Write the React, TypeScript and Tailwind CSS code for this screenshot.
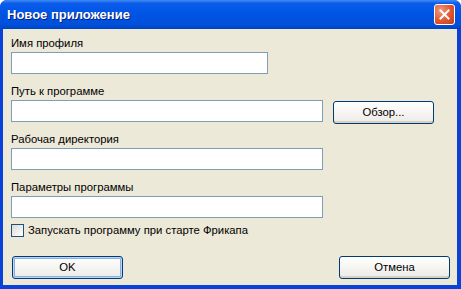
import { useState } from "react";

const font = { fontFamily: '"Liberation Sans", Arial, sans-serif' };

function Field({ label, width }: { label: string; width: string }) {
  return (
    <div className="flex flex-col">
      <span className="text-[11.3px] leading-[14px] text-black">{label}</span>
      <input
        className={`mt-[2px] h-[22px] ${width} border border-[#7F9DB9] bg-white px-1 text-[11px] outline-none`}
      />
    </div>
  );
}

function XpButton({ children, def }: { children: string; def?: boolean }) {
  return (
    <button
      className={`h-[23px] w-full rounded-[3px] border border-[#003C74] bg-gradient-to-b from-white to-[#ECEBE6] text-[11.3px] text-black ${
        def ? "shadow-[inset_0_0_0_1px_#BCD4F6,inset_0_0_0_2px_#89ADE4]" : "shadow-[inset_0_-2px_0_#D6D0C5]"
      }`}
    >
      {children}
    </button>
  );
}

export default function App() {
  const [checked, setChecked] = useState(false);
  return (
    <div style={font} className="flex h-[289px] w-[461px] flex-col overflow-hidden rounded-t-[7px] bg-[#0842D8]">
      <div className="flex h-[29px] shrink-0 items-center justify-between bg-[linear-gradient(to_bottom,#3F8CF3_0%,#0A5BEB_12%,#0054E3_50%,#0050DA_85%,#0042C4_100%)] pl-[7px] pr-[6px]">
        <span className="text-[13px] font-bold text-white [text-shadow:1px_1px_0_#0A1E7A]">
          Новое приложение
        </span>
        <button className="flex h-[21px] w-[21px] items-center justify-center rounded-[3px] border border-white bg-[radial-gradient(circle_at_30%_30%,#F09A7A_0%,#E0552F_55%,#C63A1A_100%)]">
          <svg width="11" height="11" viewBox="0 0 11 11">
            <path d="M1.5 1.5 L9.5 9.5 M9.5 1.5 L1.5 9.5" stroke="white" strokeWidth="2" strokeLinecap="square" />
          </svg>
        </button>
      </div>
      <div className="mb-[4px] ml-[3px] mr-[4px] flex flex-1 flex-col bg-[#ECE9D8] px-[8px] pt-[7px]">
        <div className="flex flex-col gap-[10px]">
          <Field label="Имя профиля" width="w-[257px]" />
          <div className="flex items-end gap-[10px]">
            <Field label="Путь к программе" width="w-[312px]" />
            <div className="mb-[-2px] w-[101px]">
              <XpButton>Обзор...</XpButton>
            </div>
          </div>
          <Field label="Рабочая директория" width="w-[312px]" />
          <Field label="Параметры программы" width="w-[312px]" />
        </div>
        <label className="mt-[5px] flex items-center gap-[4px]">
          <span
            onClick={() => setChecked(!checked)}
            className="flex h-[13px] w-[13px] items-center justify-center border border-[#1C5180] bg-gradient-to-br from-[#DCDBD5] to-white"
          >
            {checked && <span className="text-[10px] leading-none text-[#21A121]">✓</span>}
          </span>
          <span className="text-[11.3px] leading-[14px] text-black">Запускать программу при старте Фрикапа</span>
        </label>
        <div className="-mr-[1px] mt-[17px] flex justify-between pl-[1px]">
          <div className="w-[111px]">
            <XpButton def>OK</XpButton>
          </div>
          <div className="w-[111px]">
            <XpButton>Отмена</XpButton>
          </div>
        </div>
      </div>
    </div>
  );
}
